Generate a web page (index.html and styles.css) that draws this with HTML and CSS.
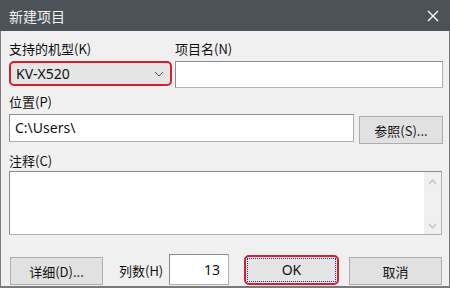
FILE: index.html
```html
<!DOCTYPE html>
<html lang="zh">
<head>
  <meta charset="UTF-8">
  <title>新建项目</title>
  <link rel="stylesheet" href="styles.css">
</head>
<body>
  <div class="ventana">
    <!-- Barra de título -->
    <div class="titulo">
      <span>新建项目</span>
      <svg class="cerrar" width="12" height="12" viewBox="0 0 12 12">
        <path d="M1 1 L11 11 M11 1 L1 11" stroke="#fff" stroke-width="1.3" fill="none"/>
      </svg>
    </div>

    <div class="cuerpo">
      <!-- Modelo y nombre -->
      <div class="fila">
        <div class="campo modelo">
          <label>支持的机型(K)</label>
          <div class="combo">
            <span>KV-X520</span>
            <svg width="10" height="6" viewBox="0 0 10 6">
              <path d="M1 1 L5 5 L9 1" stroke="#555" stroke-width="1" fill="none"/>
            </svg>
          </div>
        </div>
        <div class="campo nombre">
          <label>项目名(N)</label>
          <div class="entrada alta"></div>
        </div>
      </div>

      <!-- Ubicación -->
      <label class="etiqueta">位置(P)</label>
      <div class="fila ruta">
        <div class="entrada ancha">C:\Users\</div>
        <button class="boton referencia">参照(S)...</button>
      </div>

      <!-- Comentario -->
      <label class="etiqueta nota">注释(C)</label>
      <div class="texto">
        <div class="barra">
          <svg width="9" height="6" viewBox="0 0 9 6"><path d="M1 5 L4.5 1 L8 5" stroke="#c2c2c2" stroke-width="1.2" fill="none"/></svg>
          <svg width="9" height="6" viewBox="0 0 9 6"><path d="M1 1 L4.5 5 L8 1" stroke="#c2c2c2" stroke-width="1.2" fill="none"/></svg>
        </div>
      </div>

      <!-- Botones inferiores -->
      <div class="fila pie">
        <button class="boton detalle">详细(D)...</button>
        <span class="columnas">列数(H)</span>
        <div class="entrada numero">13</div>
        <button class="boton ok"><span>OK</span></button>
        <button class="boton cancelar">取消</button>
      </div>
    </div>
  </div>
</body>
</html>
```

FILE: styles.css
```css
* {
  box-sizing: border-box;
}

body {
  margin: 0;
  background: #f0f0f0;
  font-family: "Noto Sans CJK SC", "Noto Sans", sans-serif;
  font-size: 13px;
  color: #111;
}

.ventana {
  width: 450px;
  height: 288px;
  background: #f0f0f0;
  border: 1px solid #7a7a7a;
  border-top: none;
  border-bottom-width: 2px;
}

.titulo {
  height: 31px;
  background: #4b5258;
  color: #f2f2f2;
  display: flex;
  align-items: center;
  justify-content: space-between;
  padding: 0 11px 0 9px;
  font-size: 14px;
  margin: 0 -1px;
}

.cuerpo {
  padding: 8px 6px 0 8px;
}

.fila {
  display: flex;
}

.campo {
  display: flex;
  flex-direction: column;
}

label,
.etiqueta {
  display: block;
  height: 20px;
  line-height: 20px;
}

.modelo {
  width: 163px;
  margin-right: 3px;
}

.modelo label,
.nombre label {
  margin-bottom: 2px;
}

.nombre {
  flex: 1;
}

.combo {
  height: 25px;
  border: 2px solid #d2202f;
  border-radius: 5px;
  background: #e5e5e5;
  display: flex;
  align-items: center;
  justify-content: space-between;
  padding: 0 6px 0 5px;
  font-family: "Noto Sans", sans-serif;
  font-size: 14px;
}

.entrada {
  background: #fff;
  border: 1px solid #8c8c8c;
  border-right-color: #b0b0b0;
  border-bottom-color: #b0b0b0;
}

.alta {
  height: 27px;
}

.etiqueta {
  margin-top: 4px;
}

.nota {
  margin-top: 7px;
}

.ruta {
  margin-top: 2px;
  align-items: flex-start;
}

.ancha {
  width: 345px;
  height: 28px;
  line-height: 26px;
  padding-left: 5px;
  font-family: "Noto Sans", sans-serif;
  font-size: 14px;
}

.boton {
  background: #e1e1e1;
  border: 1px solid #adadad;
  font-family: "Noto Sans CJK SC", sans-serif;
  font-size: 13px;
  color: #111;
  padding: 0;
}

.referencia {
  width: 84px;
  height: 28px;
  margin-left: 5px;
  margin-top: 2px;
}

.texto {
  height: 64px;
  background: #fff;
  border: 1px solid #8c8c8c;
  border-right-color: #b0b0b0;
  border-bottom-color: #b0b0b0;
  margin-right: 1px;
  display: flex;
  justify-content: flex-end;
}

.barra {
  width: 17px;
  background: #f0f0f0;
  display: flex;
  flex-direction: column;
  justify-content: space-between;
  align-items: center;
  padding: 7px 0 5px;
}

.pie {
  margin-top: 19px;
  align-items: flex-end;
}

.detalle {
  width: 93px;
  height: 28px;
  margin-left: 1px;
}

.columnas {
  margin-left: 16px;
  width: 50px;
  line-height: 28px;
}

.numero {
  width: 60px;
  height: 31px;
  text-align: right;
  padding-right: 8px;
  line-height: 29px;
  font-family: "Noto Sans", sans-serif;
  font-size: 14px;
}

.ok {
  width: 95px;
  height: 30px;
  margin-left: 15px;
  border: 2px solid #d2202f;
  border-radius: 5px;
  padding: 1px;
  background: #e5e5e5;
}

.ok span {
  display: block;
  height: 100%;
  line-height: 22px;
  border: 1px dotted #1e3a8c;
  font-family: "Noto Sans", sans-serif;
  font-size: 14px;
}

.cancelar {
  width: 93px;
  height: 28px;
  margin-left: 10px;
}
```
